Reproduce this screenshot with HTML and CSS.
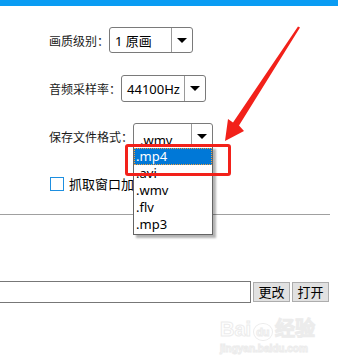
FILE: index.html
```html
<!DOCTYPE html>
<html lang="zh-CN">
<head>
    <meta charset="UTF-8">
    <title>录制设置</title>
    <link rel="stylesheet" href="styles.css">
</head>
<body>
    <div class="top-bar"></div>

    <div class="form">
        <div class="row">
            <span class="label">画质级别：</span>
            <div class="select w84">
                <span class="value">1 原画</span>
                <span class="arrow"></span>
            </div>
        </div>

        <div class="row">
            <span class="label">音频采样率：</span>
            <div class="select w85 tall">
                <span class="value">44100Hz</span>
                <span class="arrow"></span>
            </div>
        </div>

        <div class="row">
            <span class="label">保存文件格式：</span>
            <div class="select w80 open">
                <span class="value">.wmv</span>
                <span class="arrow"></span>
                <!-- 展开的下拉列表 -->
                <ul class="dropdown">
                    <li class="active">.mp4</li>
                    <li>.avi</li>
                    <li>.wmv</li>
                    <li>.flv</li>
                    <li>.mp3</li>
                </ul>
                <div class="mark-box"></div>
            </div>
        </div>

        <label class="check-row">
            <span class="checkbox"></span>
            <span class="check-text">抓取窗口加强</span>
        </label>
    </div>

    <div class="divider"></div>

    <div class="path-row">
        <div class="path-input"></div>
        <button class="btn">更改</button>
        <button class="btn">打开</button>
    </div>

    <div class="watermark">
        <div class="wm-logo">Bai<span class="paw">du</span>经验</div>
        <div class="wm-url">jingyan.baidu.com</div>
    </div>

    <!-- 红色标注箭头 -->
    <svg class="red-arrow" width="338" height="364" viewBox="0 0 338 364">
        <polygon points="300,27.5 239,125.5 244,131 225,141 228,119 233,122.5 298,26.5" fill="#f2211a"/>
    </svg>
</body>
</html>
```

FILE: styles.css
```css
/* 基础设置 */
* {
    margin: 0;
    padding: 0;
    box-sizing: border-box;
}

body {
    width: 338px;
    height: 364px;
    background: #fff;
    font-family: 'Noto Sans CJK SC', 'Noto Sans', sans-serif;
    font-size: 12px;
    color: #000;
    position: relative;
    overflow: hidden;
}

.top-bar {
    height: 6px;
    background: #0a9cf3;
}

/* 表单区域 */
.form {
    display: flex;
    flex-direction: column;
    gap: 22px;
    padding: 21px 0 0 49px;
}

.row {
    display: flex;
    align-items: center;
    height: 26px;
}

.label {
    font-size: 12px;
    color: #1a1a1a;
    white-space: nowrap;
}

.select {
    position: relative;
    display: flex;
    height: 26px;
    border: 1px solid #7a7a7a;
    border-radius: 3px;
    background: #fff;
}

.select.tall {
    height: 27px;
    margin-top: 1px;
}

.w84 { width: 84px; }
.w85 { width: 85px; }
.w80 { width: 80px; }

.value {
    flex: 1;
    display: flex;
    align-items: center;
    padding-left: 5px;
    font-family: 'Noto Sans', 'Noto Sans CJK SC', sans-serif;
    font-size: 13px;
    border-right: 1px solid #9a9a9a;
}

.open .value {
    align-items: flex-end;
    padding-left: 6px;
    line-height: 16px;
}

.arrow {
    width: 20px;
    display: flex;
    align-items: center;
    justify-content: center;
}

.arrow::before {
    content: '';
    border-left: 5px solid transparent;
    border-right: 5px solid transparent;
    border-top: 5px solid #000;
}

/* 下拉列表 */
.dropdown {
    position: absolute;
    top: 22px;
    left: -1px;
    width: 80px;
    list-style: none;
    background: #fff;
    border: 1px solid #646464;
    padding: 1px 0 1px;
    box-shadow: 3px 3px 2px rgba(0, 0, 0, 0.3);
    z-index: 2;
}

.dropdown li {
    height: 17px;
    line-height: 17px;
    padding-left: 2px;
    font-family: 'Noto Sans', sans-serif;
    font-size: 13px;
    color: #000;
}

.dropdown li.active {
    background: #0078d7;
    color: #fff;
    outline: 1px dotted #f0a040;
    outline-offset: -1px;
}

/* 红色标注框 */
.mark-box {
    position: absolute;
    top: 20px;
    left: -9px;
    width: 106px;
    height: 32px;
    border: 3px solid #f2211a;
    border-radius: 3px;
    z-index: 3;
}

/* 复选框 */
.check-row {
    display: flex;
    align-items: center;
    height: 20px;
    margin-top: 3px;
    padding-left: 1px;
}

.checkbox {
    width: 14px;
    height: 14px;
    border: 1px solid #1e8fe0;
    background: #fff;
}

.check-text {
    margin-left: 5px;
    font-size: 13px;
    line-height: 20px;
}

.divider {
    margin-top: 20px;
    width: 330px;
    height: 1px;
    background: #a0a0a0;
}

/* 保存路径 */
.path-row {
    display: flex;
    align-items: center;
    margin-top: 66px;
}

.path-input {
    width: 251px;
    height: 22px;
    border: 1px solid #777;
    border-left: none;
    background: #fff;
}

.btn {
    width: 37px;
    height: 20px;
    margin-left: 2px;
    background: #e1e1e1;
    border: 1px solid #adadad;
    font-family: 'Noto Sans CJK SC', sans-serif;
    font-size: 13px;
    line-height: 18px;
    color: #000;
}

/* 水印 */
.watermark {
    position: absolute;
    left: 220px;
    top: 318px;
    color: #fff;
    -webkit-text-stroke: 1px #ececec;
}

.wm-logo {
    font-family: 'Liberation Sans', sans-serif;
    font-size: 20px;
    font-weight: bold;
    line-height: 22px;
}

.paw {
    font-size: 11px;
    padding: 2px 2px;
    border: 1px solid #ececec;
    border-radius: 50%;
    margin: 0 2px;
}

.wm-url {
    font-family: 'Liberation Sans', sans-serif;
    font-size: 10px;
    font-weight: bold;
    line-height: 12px;
}

.red-arrow {
    position: absolute;
    left: 0;
    top: 0;
    z-index: 5;
    pointer-events: none;
}
```
